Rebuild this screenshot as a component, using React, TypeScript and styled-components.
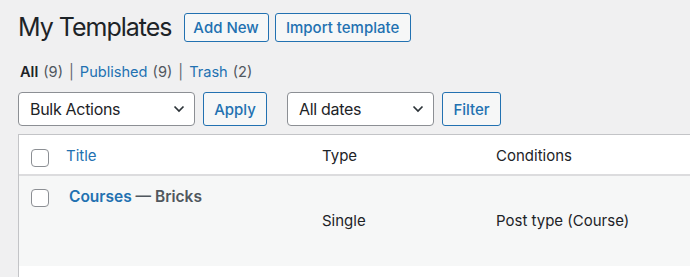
import styled, { createGlobalStyle } from "styled-components";

const GlobalStyle = createGlobalStyle`
    body {
        margin: 0;
        background: #f0f0f1;
        color: #1d2327;
        font-family: Inter, "Liberation Sans", sans-serif;
        overflow: hidden;
    }
`;

const Wrap = styled.div`
    padding: 13px 0 0 18px;
`;

const TitleRow = styled.div`
    display: flex;
    align-items: center;
    height: 29px;
`;

const Heading = styled.h1`
    margin: 0 12px 0 0;
    font-size: 25px;
    font-weight: 400;
    line-height: 29px;
    letter-spacing: -1px;
`;

const Button = styled.span<{ $w: number; $h: number }>`
    display: inline-flex;
    align-items: center;
    justify-content: center;
    box-sizing: border-box;
    width: ${(p) => p.$w}px;
    height: ${(p) => p.$h}px;
    border: 1px solid #2271b1;
    border-radius: 3px;
    background: #f6f7f7;
    color: #2271b1;
    font-size: 15px;
    font-weight: 500;
`;

const TitleButtons = styled.div`
    display: flex;
    gap: 6px;
`;

const Views = styled.div`
    margin-top: 20px;
    display: flex;
    align-items: center;
    height: 20px;
    font-size: 14.6px;
    color: #50575e;

    b {
        color: #1d2327;
        font-weight: 600;
        margin-left: 2px;
    }
    a {
        color: #2271b1;
        text-decoration: none;
    }
    span.count {
        margin-left: 5px;
    }
    span.sep {
        color: #646970;
        margin: 0 6px;
    }
`;

const Tablenav = styled.div`
    margin-top: 10px;
    display: flex;
    align-items: center;
    gap: 8px;
`;

const SelectBox = styled.div<{ $w: number; $gap?: number }>`
    box-sizing: border-box;
    width: ${(p) => p.$w}px;
    height: 34px;
    margin-left: ${(p) => p.$gap ?? 0}px;
    display: flex;
    align-items: center;
    justify-content: space-between;
    padding: 0 9px 0 11px;
    border: 1px solid #8c8f94;
    border-radius: 4px;
    background: #fff;
    font-size: 16px;
    letter-spacing: -0.3px;
    color: #1d2327;
`;

const Table = styled.div`
    margin-top: 8px;
    width: 700px;
    border: 1px solid #c3c4c7;
    background: #fff;
`;

const Row = styled.div<{ $head?: boolean }>`
    display: grid;
    grid-template-columns: 35px 256px 174px 1fr;
    padding-left: 12px;
    height: ${(p) => (p.$head ? 39 : 90)}px;
    background: ${(p) => (p.$head ? "#fff" : "#f6f7f7")};
    border-bottom: ${(p) => (p.$head ? "2px solid #dcdcde" : "none")};
    margin-bottom: ${(p) => (p.$head ? 0 : 11)}px;
`;

const Cell = styled.div<{ $top: number }>`
    padding-top: ${(p) => p.$top}px;
    font-size: 15px;
    line-height: 20px;
    color: #1d2327;

    a {
        color: #2271b1;
        text-decoration: none;
    }
    strong {
        font-size: 15.5px;
        font-weight: 600;
        color: #50575e;
    }
    strong a {
        margin-left: 3px;
    }
`;

const Check = styled.span`
    display: block;
    box-sizing: border-box;
    width: 18px;
    height: 18px;
    border: 1px solid #8c8f94;
    border-radius: 4px;
    background: #fff;
`;

const Chevron = () => (
    <svg width="12" height="8" viewBox="0 0 12 8" fill="none">
        <path d="M1.5 1.5 6 6 10.5 1.5" stroke="#2c3338" strokeWidth="1.7" />
    </svg>
);

export default function App() {
    return (
        <>
            <GlobalStyle />
            <Wrap>
                <TitleRow>
                    <Heading>My Templates</Heading>
                    <TitleButtons>
                        <Button $w={85} $h={29}>Add New</Button>
                        <Button $w={136} $h={29}>Import template</Button>
                    </TitleButtons>
                </TitleRow>
                <Views>
                    <b>All</b>
                    <span className="count">(9)</span>
                    <span className="sep">|</span>
                    <a>Published</a>
                    <span className="count">(9)</span>
                    <span className="sep">|</span>
                    <a>Trash</a>
                    <span className="count">(2)</span>
                </Views>
                <Tablenav>
                    <SelectBox $w={177}>
                        Bulk Actions
                        <Chevron />
                    </SelectBox>
                    <Button $w={64} $h={34}>Apply</Button>
                    <SelectBox $w={147} $gap={12}>
                        All dates
                        <Chevron />
                    </SelectBox>
                    <Button $w={59} $h={34}>Filter</Button>
                </Tablenav>
                <Table>
                    <Row $head>
                        <Cell $top={14}><Check /></Cell>
                        <Cell $top={11}><a>Title</a></Cell>
                        <Cell $top={11}>Type</Cell>
                        <Cell $top={11}>Conditions</Cell>
                    </Row>
                    <Row>
                        <Cell $top={13}><Check /></Cell>
                        <Cell $top={11}>
                            <strong><a>Courses</a> — Bricks</strong>
                        </Cell>
                        <Cell $top={35}>Single</Cell>
                        <Cell $top={35}>Post type (Course)</Cell>
                    </Row>
                </Table>
            </Wrap>
        </>
    );
}
